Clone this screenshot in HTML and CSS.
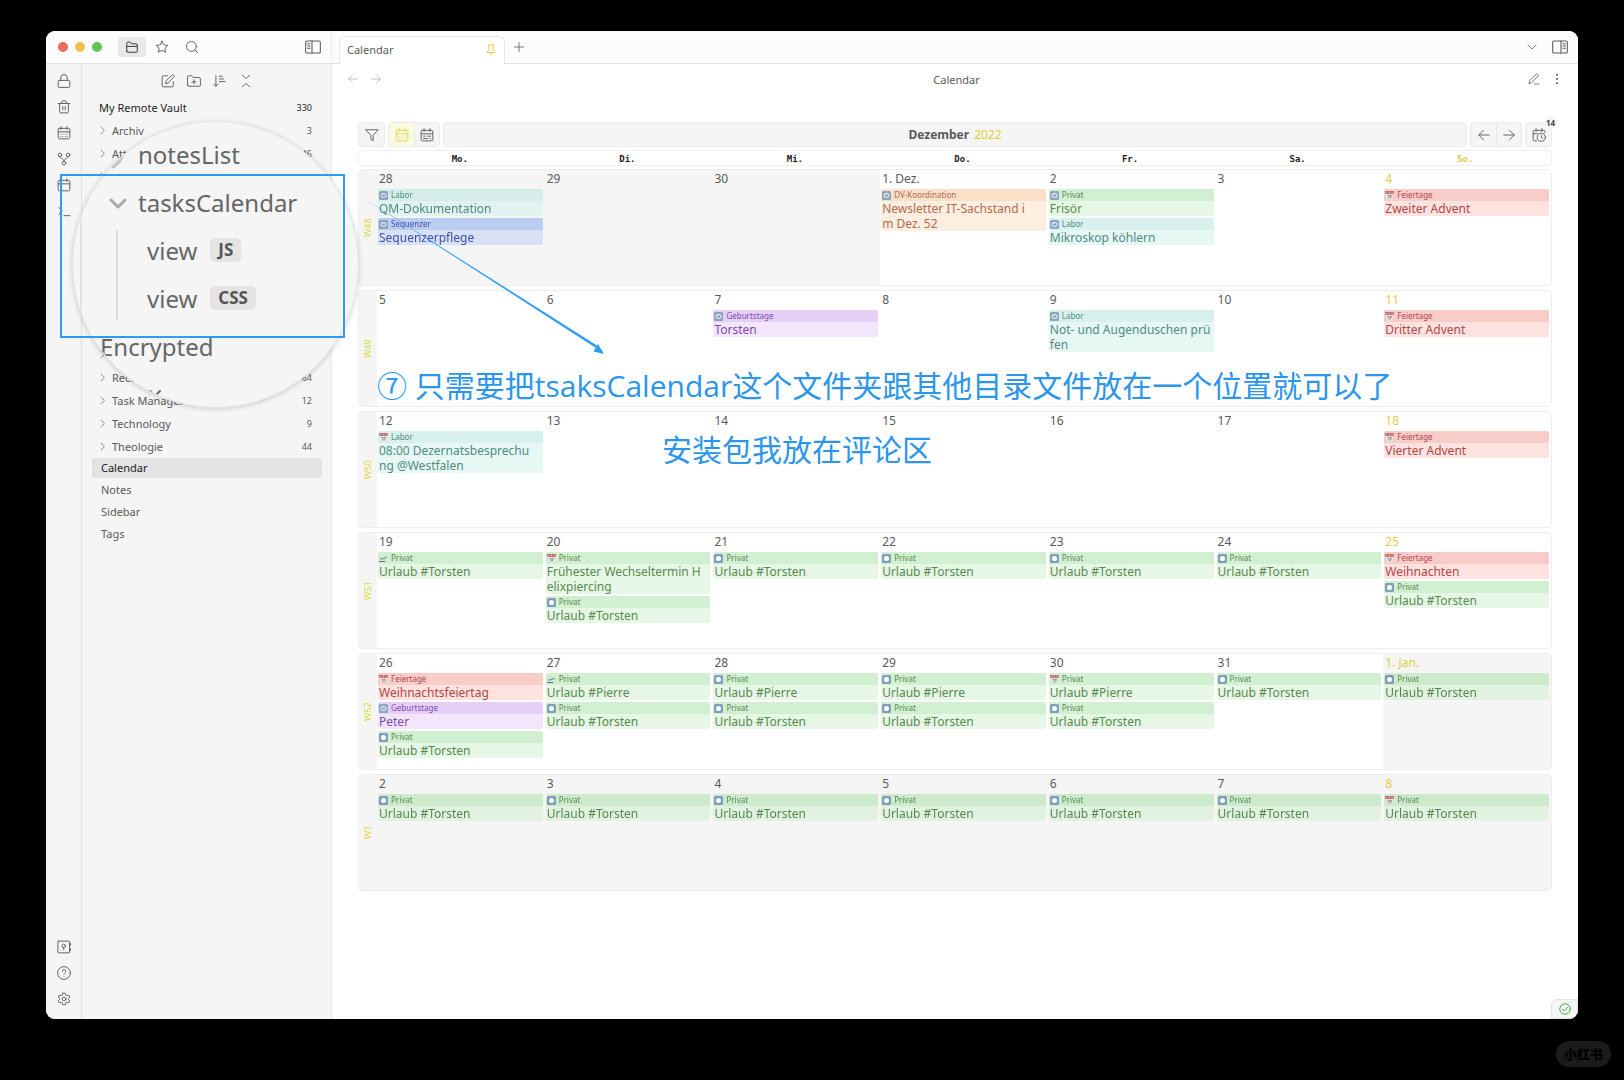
FILE: index.html
```html
<!DOCTYPE html>
<html lang="de">
<head>
<meta charset="utf-8">
<title>Calendar</title>
<link rel="stylesheet" href="styles.css">
</head>
<body>
<svg class="sprite" aria-hidden="true">
  <symbol id="folder" viewBox="0 0 24 24"><path d="M3 19V5.500a2 2 0 0 1 2-2h4l2.500 3H19a2 2 0 0 1 2 2V19a2 2 0 0 1-2 2H5a2 2 0 0 1-2-2zM3 11h18"/></symbol>
  <symbol id="star" viewBox="0 0 24 24"><path d="M12 2l3.100 6.300 6.900 1-5 4.900 1.200 6.800L12 17.800 5.800 21 7 14.200 2 9.300l6.900-1z"/></symbol>
  <symbol id="search" viewBox="0 0 24 24"><circle cx="11" cy="11" r="8.500"/><path d="M21.500 21.500L17 17"/></symbol>
  <symbol id="panel-left" viewBox="0 0 24 24"><rect x="1" y="3" width="22" height="18" rx="2"/><path d="M10.500 3v18M4 7h3.500M4 10.500h3.500M4 14h3.500"/></symbol>
  <symbol id="panel-right" viewBox="0 0 24 24"><rect x="1" y="3" width="22" height="18" rx="2"/><path d="M13.500 3v18M16.500 7H20M16.500 10.500H20M16.500 14H20"/></symbol>
  <symbol id="lock" viewBox="0 0 24 24"><rect x="2" y="11" width="20" height="12" rx="2"/><path d="M6.500 11V6.500a5.500 5.500 0 0 1 11 0V11"/></symbol>
  <symbol id="trash" viewBox="0 0 24 24"><path d="M2 6h20M4.500 6v14a2 2 0 0 0 2 2h11a2 2 0 0 0 2-2V6M8 6V3.500a2 2 0 0 1 2-2h4a2 2 0 0 1 2 2V6M10 11v6M14 11v6"/></symbol>
  <symbol id="cal-days" viewBox="0 0 24 24"><rect x="2" y="4" width="20" height="18" rx="2"/><path d="M7 1v5M17 1v5M2 10h20M6.500 14h.1M10 14h.1M14 14h.1M17.500 14h.1M6.500 18h.1M10 18h.1M14 18h.1M17.500 18h.1"/></symbol>
  <symbol id="cal-list" viewBox="0 0 24 24"><rect x="2" y="4" width="20" height="18" rx="2"/><path d="M7 1v5M17 1v5M2 10h20M13 14h5M6 14h3M6 18h7M17 18h1"/></symbol>
  <symbol id="calendar" viewBox="0 0 24 24"><rect x="2" y="4" width="20" height="18" rx="2"/><path d="M7 1v5M17 1v5M2 10h20"/></symbol>
  <symbol id="fork" viewBox="0 0 24 24"><circle cx="5" cy="5" r="3"/><circle cx="19" cy="5" r="3"/><circle cx="12" cy="19" r="3"/><path d="M5 8c0 4 7 2 7 8M19 8c0 4-7 2-7 8"/></symbol>
  <symbol id="terminal" viewBox="0 0 24 24"><path d="M3 18l6-6-6-6M12 20h10"/></symbol>
  <symbol id="vault" viewBox="0 0 24 24"><rect x="1.500" y="2" width="20" height="20" rx="1"/><circle cx="11.500" cy="10" r="3"/><path d="M11.500 13v4M23 6v3M23 15v3"/></symbol>
  <symbol id="help" viewBox="0 0 24 24"><circle cx="12" cy="12" r="11"/><path d="M9 9a3 3 0 0 1 6 .5c0 2-3 2.500-3 4M12 17.500h.1"/></symbol>
  <symbol id="gear" viewBox="0 0 24 24"><circle cx="12" cy="12" r="3.200"/><path d="M10 2h4l.8 3.200 2 1.200 3.200-1 2 3.500L19.600 11v2l2.400 2.200-2 3.400-3.200-.9-2 1.200L14 22h-4l-.8-3.100-2-1.200-3.200.9-2-3.400L4.400 13v-2L2 8.900l2-3.500 3.200 1 2-1.200z"/></symbol>
  <symbol id="edit" viewBox="0 0 24 24"><path d="M11 3H4a2 2 0 0 0-2 2v15a2 2 0 0 0 2 2h15a2 2 0 0 0 2-2v-7M8 16l1-4.500L19 1.700a1.500 1.500 0 0 1 2.200 0l1 1a1.500 1.500 0 0 1 0 2.200L12.500 15z"/></symbol>
  <symbol id="folder-plus" viewBox="0 0 24 24"><path d="M1 19V5a2 2 0 0 1 2-2h5.500L11 6h10a2 2 0 0 1 2 2v11a2 2 0 0 1-2 2H3a2 2 0 0 1-2-2zM12 10v7M8.500 13.500h7"/></symbol>
  <symbol id="sort" viewBox="0 0 24 24"><path d="M1 17l4 4 4-4M5 3v18M11 4h5M11 8.500h7M11 13h10"/></symbol>
  <symbol id="collapse" viewBox="0 0 24 24"><path d="M6 22l6-6 6 6M6 2l6 6 6-6"/></symbol>
  <symbol id="pin" viewBox="0 0 24 24"><path d="M12 17v6M5 17h14v-2l-3-4V5c1.500 0 2-1 2-2.500V2H6v.5C6 4 6.500 5 8 5v6l-3 4z"/></symbol>
  <symbol id="plus" viewBox="0 0 24 24"><path d="M12 3v18M3 12h18"/></symbol>
  <symbol id="left" viewBox="0 0 24 24"><path d="M21 12H3M11 4l-8 8 8 8"/></symbol>
  <symbol id="right" viewBox="0 0 24 24"><path d="M3 12h18M13 4l8 8-8 8"/></symbol>
  <symbol id="down" viewBox="0 0 24 24"><path d="M4 8l8 8 8-8"/></symbol>
  <symbol id="next" viewBox="0 0 24 24"><path d="M8 3l9 9-9 9"/></symbol>
  <symbol id="pencil" viewBox="0 0 24 24"><path d="M13 22h9M2 21l1.500-6L16.500 2.500a2 2 0 0 1 3 0l.5.5a2 2 0 0 1 0 3L7.500 19z"/></symbol>
  <symbol id="dots" viewBox="0 0 24 24"><path d="M12 3.500v.1M12 12v.1M12 20.500v.1" stroke-width="4"/></symbol>
  <symbol id="filter" viewBox="0 0 24 24"><path d="M1.500 3h21L14 12.500V22l-4-3v-6.500z"/></symbol>
  <symbol id="cal-clock" viewBox="0 0 24 24"><path d="M22 8V6a2 2 0 0 0-2-2H4a2 2 0 0 0-2 2v14a2 2 0 0 0 2 2h4M7 1v5M17 1v5M2 10h7"/><circle cx="16" cy="16" r="7"/><path d="M16 12.500V16l2.500 1.500"/></symbol>
  <symbol id="check" viewBox="0 0 24 24"><circle cx="12" cy="12" r="10.500"/><path d="M7 12.500l3.500 3.500L17 9"/></symbol>
  <symbol id="e-rep" viewBox="0 0 18 18"><rect width="18" height="18" rx="3" fill="#8aa6c4"/><rect x="4" y="5.500" width="10" height="7" rx="3" fill="none" stroke="#fff" stroke-width="2"/></symbol>
  <symbol id="e-rec" viewBox="0 0 18 18"><rect width="18" height="18" rx="3" fill="#7f9fc0"/><circle cx="9" cy="9" r="5" fill="#fff"/></symbol>
  <symbol id="e-day" viewBox="0 0 18 18"><path d="M1 1h16l-3 16H4z" fill="#e8e6e4"/><path d="M0 0h18l-1 6H1z" fill="#bf686c"/><path d="M4 2v2M9 2v2M14 2v2" stroke="#f0d8d5" stroke-width="1.500"/><path d="M6 9h2v5M10 9h3l-2 5" fill="none" stroke="#777" stroke-width="1.500"/></symbol>
  <symbol id="e-fly" viewBox="0 0 18 18"><path d="M1 8l3 1 12-4-1 3-11 4z" fill="#6c9cab"/><path d="M1 15h11" stroke="#5c7180" stroke-width="2"/></symbol>
</svg>

<div class="window">
  <header class="titlebar">
    <div class="side-head">
      <span class="light red"></span><span class="light amber"></span><span class="light green"></span>
      <button class="icon-btn active" aria-label="Files"><svg><use href="#folder"/></svg></button>
      <button class="icon-btn" aria-label="Starred"><svg><use href="#star"/></svg></button>
      <button class="icon-btn" aria-label="Search"><svg><use href="#search"/></svg></button>
      <button class="icon-btn push" aria-label="Toggle left sidebar"><svg class="wide"><use href="#panel-left"/></svg></button>
    </div>
    <div class="tabs">
      <div class="tab"><span>Calendar</span><svg class="i12"><use href="#pin"/></svg></div>
      <button class="icon-btn" aria-label="New tab"><svg class="i12"><use href="#plus"/></svg></button>
      <button class="icon-btn push" aria-label="Tab list"><svg class="i12"><use href="#down"/></svg></button>
      <button class="icon-btn last" aria-label="Toggle right sidebar"><svg class="wide"><use href="#panel-right"/></svg></button>
    </div>
  </header>

  <div class="workspace">
    <nav class="ribbon" aria-label="Ribbon">
      <button aria-label="Lock"><svg><use href="#lock"/></svg></button>
      <button aria-label="Trash"><svg><use href="#trash"/></svg></button>
      <button aria-label="Days"><svg><use href="#cal-days"/></svg></button>
      <button aria-label="Graph"><svg><use href="#fork"/></svg></button>
      <button aria-label="Daily note"><svg><use href="#calendar"/></svg></button>
      <button aria-label="Commands"><svg><use href="#terminal"/></svg></button>
      <button class="to-end" aria-label="Vault"><svg><use href="#vault"/></svg></button>
      <button aria-label="Help"><svg><use href="#help"/></svg></button>
      <button aria-label="Settings"><svg><use href="#gear"/></svg></button>
    </nav>

    <aside class="explorer">
      <div class="actions">
        <button aria-label="New note"><svg><use href="#edit"/></svg></button>
        <button aria-label="New folder"><svg><use href="#folder-plus"/></svg></button>
        <button aria-label="Sort"><svg><use href="#sort"/></svg></button>
        <button aria-label="Collapse all"><svg><use href="#collapse"/></svg></button>
      </div>
      <div class="row vault"><span>My Remote Vault</span><small>330</small></div>
      <div class="row"><svg><use href="#next"/></svg><span>Archiv</span><small>3</small></div>
      <div class="row"><svg><use href="#next"/></svg><span>Att</span><small>46</small></div>
      <div class="row"><svg><use href="#next"/></svg></div>
      <div class="row lower"><svg><use href="#next"/></svg></div>
      <div class="row"><svg><use href="#next"/></svg><span>Reco</span><small>64</small></div>
      <div class="row"><svg><use href="#next"/></svg><span>Task Manager</span><small>12</small></div>
      <div class="row"><svg><use href="#next"/></svg><span>Technology</span><small>9</small></div>
      <div class="row"><svg><use href="#next"/></svg><span>Theologie</span><small>44</small></div>
      <a class="file current" href="#calendar-note">Calendar</a>
      <a class="file" href="#notes">Notes</a>
      <a class="file" href="#sidebar">Sidebar</a>
      <a class="file" href="#tags">Tags</a>
    </aside>

    <main class="leaf">
      <div class="view-head">
        <button class="dim" aria-label="Back"><svg class="i12"><use href="#left"/></svg></button>
        <button class="dim" aria-label="Forward"><svg class="i12"><use href="#right"/></svg></button>
        <span class="view-title">Calendar</span>
        <button aria-label="Edit"><svg class="i12"><use href="#pencil"/></svg></button>
        <button aria-label="More"><svg class="i12"><use href="#dots"/></svg></button>
      </div>

      <div class="planner">
        <div class="toolbar">
          <div class="group"><button aria-label="Filter"><svg><use href="#filter"/></svg></button></div>
          <div class="group"><button class="on" aria-label="Month"><svg><use href="#cal-days"/></svg></button><button aria-label="List"><svg><use href="#cal-list"/></svg></button></div>
          <h1 class="group"><b>Dezember</b> <span>2022</span></h1>
          <div class="group"><button aria-label="Previous"><svg><use href="#left"/></svg></button><button aria-label="Next"><svg><use href="#right"/></svg></button></div>
          <div class="group"><button aria-label="Today"><svg><use href="#cal-clock"/></svg></button><span class="count">14</span></div>
        </div>

        <div class="weekdays"><b>Mo.</b><b>Di.</b><b>Mi.</b><b>Do.</b><b>Fr.</b><b>Sa.</b><b class="sun">So.</b></div>

        <section class="week"><a class="wk" href="#w48">W48</a>
          <div class="day off"><time>28</time>
            <article class="task labor"><h2><svg><use href="#e-rep"/></svg>Labor</h2><p>QM-Dokumentation</p></article>
            <article class="task seq"><h2><svg><use href="#e-rep"/></svg>Sequenzer</h2><p>Sequenzerpflege</p></article></div>
          <div class="day off"><time>29</time></div>
          <div class="day off"><time>30</time></div>
          <div class="day"><time>1. Dez.</time>
            <article class="task dv"><h2><svg><use href="#e-rep"/></svg>DV-Koordination</h2><p>Newsletter IT-Sachstand i<br>m Dez. 52</p></article></div>
          <div class="day"><time>2</time>
            <article class="task privat"><h2><svg><use href="#e-rep"/></svg>Privat</h2><p>Frisör</p></article>
            <article class="task labor"><h2><svg><use href="#e-rep"/></svg>Labor</h2><p>Mikroskop köhlern</p></article></div>
          <div class="day"><time>3</time></div>
          <div class="day sun"><time>4</time>
            <article class="task feier"><h2><svg><use href="#e-day"/></svg>Feiertage</h2><p>Zweiter Advent</p></article></div>
        </section>

        <section class="week"><a class="wk" href="#w49">W49</a>
          <div class="day"><time>5</time></div>
          <div class="day"><time>6</time></div>
          <div class="day"><time>7</time>
            <article class="task geb"><h2><svg><use href="#e-rep"/></svg>Geburtstage</h2><p>Torsten</p></article></div>
          <div class="day"><time>8</time></div>
          <div class="day"><time>9</time>
            <article class="task labor"><h2><svg><use href="#e-rep"/></svg>Labor</h2><p>Not- und Augenduschen prü<br>fen</p></article></div>
          <div class="day"><time>10</time></div>
          <div class="day sun"><time>11</time>
            <article class="task feier"><h2><svg><use href="#e-day"/></svg>Feiertage</h2><p>Dritter Advent</p></article></div>
        </section>

        <section class="week"><a class="wk" href="#w50">W50</a>
          <div class="day"><time>12</time>
            <article class="task labor"><h2><svg><use href="#e-day"/></svg>Labor</h2><p>08:00 Dezernatsbesprechu<br>ng @Westfalen</p></article></div>
          <div class="day"><time>13</time></div>
          <div class="day"><time>14</time></div>
          <div class="day"><time>15</time></div>
          <div class="day"><time>16</time></div>
          <div class="day"><time>17</time></div>
          <div class="day sun"><time>18</time>
            <article class="task feier"><h2><svg><use href="#e-day"/></svg>Feiertage</h2><p>Vierter Advent</p></article></div>
        </section>

        <section class="week"><a class="wk" href="#w51">W51</a>
          <div class="day"><time>19</time>
            <article class="task privat"><h2><svg><use href="#e-fly"/></svg>Privat</h2><p>Urlaub #Torsten</p></article></div>
          <div class="day"><time>20</time>
            <article class="task privat"><h2><svg><use href="#e-day"/></svg>Privat</h2><p>Frühester Wechseltermin H<br>elixpiercing</p></article>
            <article class="task privat"><h2><svg><use href="#e-rec"/></svg>Privat</h2><p>Urlaub #Torsten</p></article></div>
          <div class="day"><time>21</time>
            <article class="task privat"><h2><svg><use href="#e-rec"/></svg>Privat</h2><p>Urlaub #Torsten</p></article></div>
          <div class="day"><time>22</time>
            <article class="task privat"><h2><svg><use href="#e-rec"/></svg>Privat</h2><p>Urlaub #Torsten</p></article></div>
          <div class="day"><time>23</time>
            <article class="task privat"><h2><svg><use href="#e-rec"/></svg>Privat</h2><p>Urlaub #Torsten</p></article></div>
          <div class="day"><time>24</time>
            <article class="task privat"><h2><svg><use href="#e-rec"/></svg>Privat</h2><p>Urlaub #Torsten</p></article></div>
          <div class="day sun"><time>25</time>
            <article class="task feier"><h2><svg><use href="#e-day"/></svg>Feiertage</h2><p>Weihnachten</p></article>
            <article class="task privat"><h2><svg><use href="#e-rec"/></svg>Privat</h2><p>Urlaub #Torsten</p></article></div>
        </section>

        <section class="week"><a class="wk" href="#w52">W52</a>
          <div class="day"><time>26</time>
            <article class="task feier"><h2><svg><use href="#e-day"/></svg>Feiertage</h2><p>Weihnachtsfeiertag</p></article>
            <article class="task geb"><h2><svg><use href="#e-rep"/></svg>Geburtstage</h2><p>Peter</p></article>
            <article class="task privat"><h2><svg><use href="#e-rec"/></svg>Privat</h2><p>Urlaub #Torsten</p></article></div>
          <div class="day"><time>27</time>
            <article class="task privat"><h2><svg><use href="#e-fly"/></svg>Privat</h2><p>Urlaub #Pierre</p></article>
            <article class="task privat"><h2><svg><use href="#e-rec"/></svg>Privat</h2><p>Urlaub #Torsten</p></article></div>
          <div class="day"><time>28</time>
            <article class="task privat"><h2><svg><use href="#e-rec"/></svg>Privat</h2><p>Urlaub #Pierre</p></article>
            <article class="task privat"><h2><svg><use href="#e-rec"/></svg>Privat</h2><p>Urlaub #Torsten</p></article></div>
          <div class="day"><time>29</time>
            <article class="task privat"><h2><svg><use href="#e-rec"/></svg>Privat</h2><p>Urlaub #Pierre</p></article>
            <article class="task privat"><h2><svg><use href="#e-rec"/></svg>Privat</h2><p>Urlaub #Torsten</p></article></div>
          <div class="day"><time>30</time>
            <article class="task privat"><h2><svg><use href="#e-day"/></svg>Privat</h2><p>Urlaub #Pierre</p></article>
            <article class="task privat"><h2><svg><use href="#e-rec"/></svg>Privat</h2><p>Urlaub #Torsten</p></article></div>
          <div class="day"><time>31</time>
            <article class="task privat"><h2><svg><use href="#e-rec"/></svg>Privat</h2><p>Urlaub #Torsten</p></article></div>
          <div class="day off sun"><time>1. Jan.</time>
            <article class="task privat"><h2><svg><use href="#e-rec"/></svg>Privat</h2><p>Urlaub #Torsten</p></article></div>
        </section>

        <section class="week"><a class="wk" href="#w1">W1</a>
          <div class="day off"><time>2</time>
            <article class="task privat"><h2><svg><use href="#e-rec"/></svg>Privat</h2><p>Urlaub #Torsten</p></article></div>
          <div class="day off"><time>3</time>
            <article class="task privat"><h2><svg><use href="#e-rec"/></svg>Privat</h2><p>Urlaub #Torsten</p></article></div>
          <div class="day off"><time>4</time>
            <article class="task privat"><h2><svg><use href="#e-rec"/></svg>Privat</h2><p>Urlaub #Torsten</p></article></div>
          <div class="day off"><time>5</time>
            <article class="task privat"><h2><svg><use href="#e-rec"/></svg>Privat</h2><p>Urlaub #Torsten</p></article></div>
          <div class="day off"><time>6</time>
            <article class="task privat"><h2><svg><use href="#e-rec"/></svg>Privat</h2><p>Urlaub #Torsten</p></article></div>
          <div class="day off"><time>7</time>
            <article class="task privat"><h2><svg><use href="#e-rec"/></svg>Privat</h2><p>Urlaub #Torsten</p></article></div>
          <div class="day off sun"><time>8</time>
            <article class="task privat"><h2><svg><use href="#e-day"/></svg>Privat</h2><p>Urlaub #Torsten</p></article></div>
        </section>
      </div>
      <div class="status"><svg><use href="#check"/></svg></div>
    </main>
  </div>
</div>

<div class="lens">
  <svg class="lens-lines" viewBox="0 0 287 287">
    <path d="M9 97V190" stroke="#dedede"/>
    <path d="M41 46l6-5 3-5" stroke="#c2c2c2" stroke-width="3"/>
    <path d="M39 79l7 7 7-7" stroke="#a9a9a9" stroke-width="3"/>
    <path d="M78 270l5 5 5-5" stroke="#666" stroke-width="2"/>
    <path d="M45 110V199" stroke="#d5d5d5"/>
  </svg>
  <ul class="lens-list">
    <li>notesList</li>
    <li>tasksCalendar</li>
    <li class="nested">view <kbd>JS</kbd></li>
    <li class="nested">view <kbd>CSS</kbd></li>
    <li class="outer">Encrypted</li>
  </ul>
</div>
<div class="frame"></div>
<svg class="arrow" viewBox="0 0 250 164"><path d="M2 2L237 150.500 236 153z"/><path d="M244 159l-10.500-2.500 4.500-7.500z"/></svg>
<p class="note first" lang="zh">⑦ 只需要把tsaksCalendar这个文件夹跟其他目录文件放在一个位置就可以了</p>
<p class="note second" lang="zh">安装包我放在评论区</p>
<div class="stamp" lang="zh">小红书</div>
</body>
</html>
```
FILE: styles.css
```css
* { box-sizing: border-box; }

body {
  margin: 0;
  min-height: 100vh;
  padding: 31px 46px 61px;
  display: flex;
  position: relative;
  overflow-x: hidden;
  background: #000;
  color: #5a5a5a;
  font-family: "Noto Sans", "Noto Sans CJK SC", sans-serif;
  font-size: 11px;
}

h1, h2, p, ul { margin: 0; padding: 0; font-weight: 400; }
a { color: inherit; text-decoration: none; }
button {
  border: 0;
  padding: 0;
  background: none;
  color: inherit;
  font: inherit;
  display: grid;
  place-items: center;
}
svg {
  width: 14px;
  height: 14px;
  flex: none;
  fill: none;
  stroke: currentColor;
  stroke-width: 1.600;
  stroke-linecap: round;
  stroke-linejoin: round;
}
.sprite { position: absolute; width: 0; height: 0; }
.i12 { width: 12px; height: 12px; }
.wide { width: 16px; height: 16px; }

.window {
  flex: 1;
  display: flex;
  flex-direction: column;
  border-radius: 9px;
  overflow: hidden;
  background: #fff;
}

/* title bar */
.titlebar { display: flex; height: 33px; background: #fcfcfc; }
.side-head {
  width: 286px;
  display: flex;
  align-items: center;
  padding: 0 4px 0 12px;
  border-right: 1px solid #ececec;
  border-bottom: 1px solid #e2e2e2;
}
.light { width: 10px; height: 10px; margin-right: 7px; border-radius: 50%; }
.red { background: #ec6a5e; }
.amber { background: #f4bf4f; }
.green { background: #61c554; }
.icon-btn { width: 28px; height: 20px; margin-right: 2px; border-radius: 3px; }
.icon-btn.active { background: #e9e9e9; color: #333; }
.green + .icon-btn { margin-left: 9px; }
.icon-btn.push { margin-left: auto; margin-right: 0; }
.icon-btn.last { margin: 0 4px 0 0; }
.tabs {
  flex: 1;
  display: flex;
  align-items: center;
  padding-left: 7px;
  border-bottom: 1px solid #e2e2e2;
}
.tab {
  align-self: flex-end;
  width: 166px;
  height: 28px;
  margin-bottom: -1px;
  display: flex;
  align-items: center;
  justify-content: space-between;
  padding: 0 7px 2px;
  background: #fff;
  border: 1px solid #e6e6e6;
  border-bottom: 0;
  border-radius: 6px 6px 0 0;
}
.tab svg { color: #e0cf3f; stroke-width: 2; }

/* left side */
.workspace { flex: 1; display: flex; }
.ribbon {
  width: 36px;
  display: flex;
  flex-direction: column;
  align-items: center;
  padding: 4px 0 7px;
  background: #f5f5f5;
  border-right: 1px solid #e0e0e0;
}
.ribbon button { width: 26px; height: 26px; }
.ribbon .to-end { margin-top: auto; }
.explorer {
  width: 250px;
  padding: 4px 9px 0 10px;
  background: #f5f5f5;
  border-right: 1px solid #e8e8e8;
}
.actions { display: flex; justify-content: center; height: 28px; }
.actions button { width: 26px; height: 26px; }
.row { display: flex; align-items: center; height: 23px; padding: 0 10px 0 6px; }
.row svg { width: 9px; height: 9px; margin-right: 5px; color: #8a8a8a; stroke-width: 2.500; }
.row small { margin-left: auto; font-size: 9px; }
.row.vault { padding-left: 7px; color: #1e1e1e; }
.row.lower { margin-top: 155px; }
.file {
  display: block;
  height: 20px;
  line-height: 20px;
  margin-bottom: 2px;
  padding-left: 9px;
  border-radius: 3px;
}
.file.current { background: #e3e3e3; color: #222; }

/* note view */
.leaf { flex: 1; min-width: 0; display: flex; flex-direction: column; }
.view-head { display: flex; align-items: center; height: 30px; padding: 0 10px 0 9px; }
.view-head button { width: 23px; height: 24px; }
.view-head .dim { color: #b5b5b5; }
.view-title { flex: 1; padding-left: 4px; text-align: center; }
.planner { padding: 28px 26px 0; }

.toolbar { display: flex; gap: 3px; height: 25px; margin-bottom: 3px; }
.group {
  display: flex;
  position: relative;
  background: #f5f5f5;
  border: 1px solid #e9e9e9;
  border-radius: 4px;
}
.group button { width: 25px; }
.group button + button { border-left: 1px solid #e9e9e9; }
.group .on { background: #fafae0; color: #e0d84e; }
h1.group { flex: 1; align-items: center; justify-content: center; gap: 5px; font-size: 12px; }
h1 span { color: #e0cf3f; }
.count {
  position: absolute;
  top: -7px;
  right: -6px;
  width: 13px;
  height: 13px;
  line-height: 13px;
  border-radius: 50%;
  background: #f3f3f3;
  color: #444;
  font-size: 8px;
  font-weight: 700;
  text-align: center;
}

.weekdays {
  display: grid;
  grid-template-columns: repeat(7, 1fr);
  height: 16px;
  margin-bottom: 3px;
  padding: 0 2px 0 17px;
  line-height: 17px;
  border: 1px solid #f0f0f0;
  border-radius: 4px;
  color: #222;
  font-family: "DejaVu Sans Mono", monospace;
  font-size: 9px;
  text-align: center;
}
.weekdays .sun, .day.sun time { color: #e0cf3f; }

.week {
  display: grid;
  grid-template-columns: 18px repeat(7, minmax(0, 1fr));
  min-height: 117px;
  margin-bottom: 4px;
  border: 1px solid #eeeeee;
  border-radius: 4px;
  overflow: hidden;
}
.wk {
  writing-mode: vertical-rl;
  rotate: 180deg;
  text-align: center;
  line-height: 17px;
  background: #f5f5f5;
  color: #dbd83c;
  font-size: 9px;
}
.day { display: flex; flex-direction: column; gap: 2px; padding: 0 2px 0 1px; }
.day.off { background: #f5f5f5; }
.day time { height: 17px; line-height: 18px; padding-left: 1px; font-size: 12px; }
.task { border-radius: 2px; overflow: hidden; }
.off .task { filter: brightness(.98); }
.task h2 {
  display: flex;
  align-items: center;
  gap: 3px;
  height: 12px;
  padding-left: 1px;
  font-size: 8px;
  line-height: 12px;
}
.task h2 svg { width: 9px; height: 9px; stroke: none; }
.task p { padding-left: 1px; font-size: 12px; line-height: 15px; white-space: nowrap; }

.labor { background: #e6f7f4; color: #4f8c83; }
.labor h2 { background: #d9f1ed; }
.seq { background: #dce6f8; color: #4052b0; }
.seq h2 { background: #bed0f5; }
.dv { background: #fdefe0; color: #b4694e; }
.dv h2 { background: #f9e0c6; }
.privat { background: #e6f7e6; color: #578a4e; }
.privat h2 { background: #d1efd1; }
.feier { background: #fde2df; color: #b14747; }
.feier h2 { background: #f8cdc9; }
.geb { background: #f2e5fc; color: #8049ab; }
.geb h2 { background: #e6cff7; }

.status {
  width: 27px;
  height: 20px;
  margin: auto 0 0 auto;
  display: grid;
  place-items: center;
  background: #f5f5f5;
  border: 1px solid #e4e4e4;
  border-radius: 6px 0 0 0;
  color: #4caf50;
}
.status svg { width: 12px; height: 12px; stroke-width: 2; }

/* magnifier and annotations laid over the window */
.lens {
  position: absolute;
  left: 72px;
  top: 121px;
  width: 287px;
  height: 287px;
  overflow: hidden;
  border-radius: 50%;
  background: #f5f5f5;
  border: 1px solid #e6e6e6;
  box-shadow: 0 1px 5px rgba(0, 0, 0, .18);
}
.lens-lines { position: absolute; inset: -1px; width: 287px; height: 287px; }
.lens-list { position: relative; padding: 8px 0 0 65px; list-style: none; font-size: 24px; color: #666; }
.lens-list li { display: flex; align-items: center; gap: 13px; height: 48px; }
.lens-list .nested { margin-left: 9px; }
.lens-list .outer { margin-left: -38px; }
kbd {
  height: 24px;
  padding: 0 8px;
  border-radius: 5px;
  background: #e4e4e4;
  color: #555;
  font: 700 17px/24px "Noto Sans", sans-serif;
}
.frame { position: absolute; left: 60px; top: 174px; width: 285px; height: 164px; border: 2px solid #2b9df4; }
.arrow { position: absolute; left: 360px; top: 195px; width: 250px; height: 164px; fill: #2b9df4; stroke: none; }
.note {
  position: absolute;
  color: #2b96ec;
  font-family: "Open Sans", "Noto Sans CJK SC", sans-serif;
  font-size: 30px;
  line-height: 40px;
  white-space: nowrap;
}
.note.first { left: 377px; top: 366px; }
.note.second { left: 662px; top: 430px; }
.stamp {
  position: absolute;
  right: 13px;
  bottom: 13px;
  width: 55px;
  height: 26px;
  border-radius: 13px;
  background: #1b1b1b;
  color: #000;
  font: 900 13px/26px "Noto Sans CJK SC", sans-serif;
  text-align: center;
}
```
